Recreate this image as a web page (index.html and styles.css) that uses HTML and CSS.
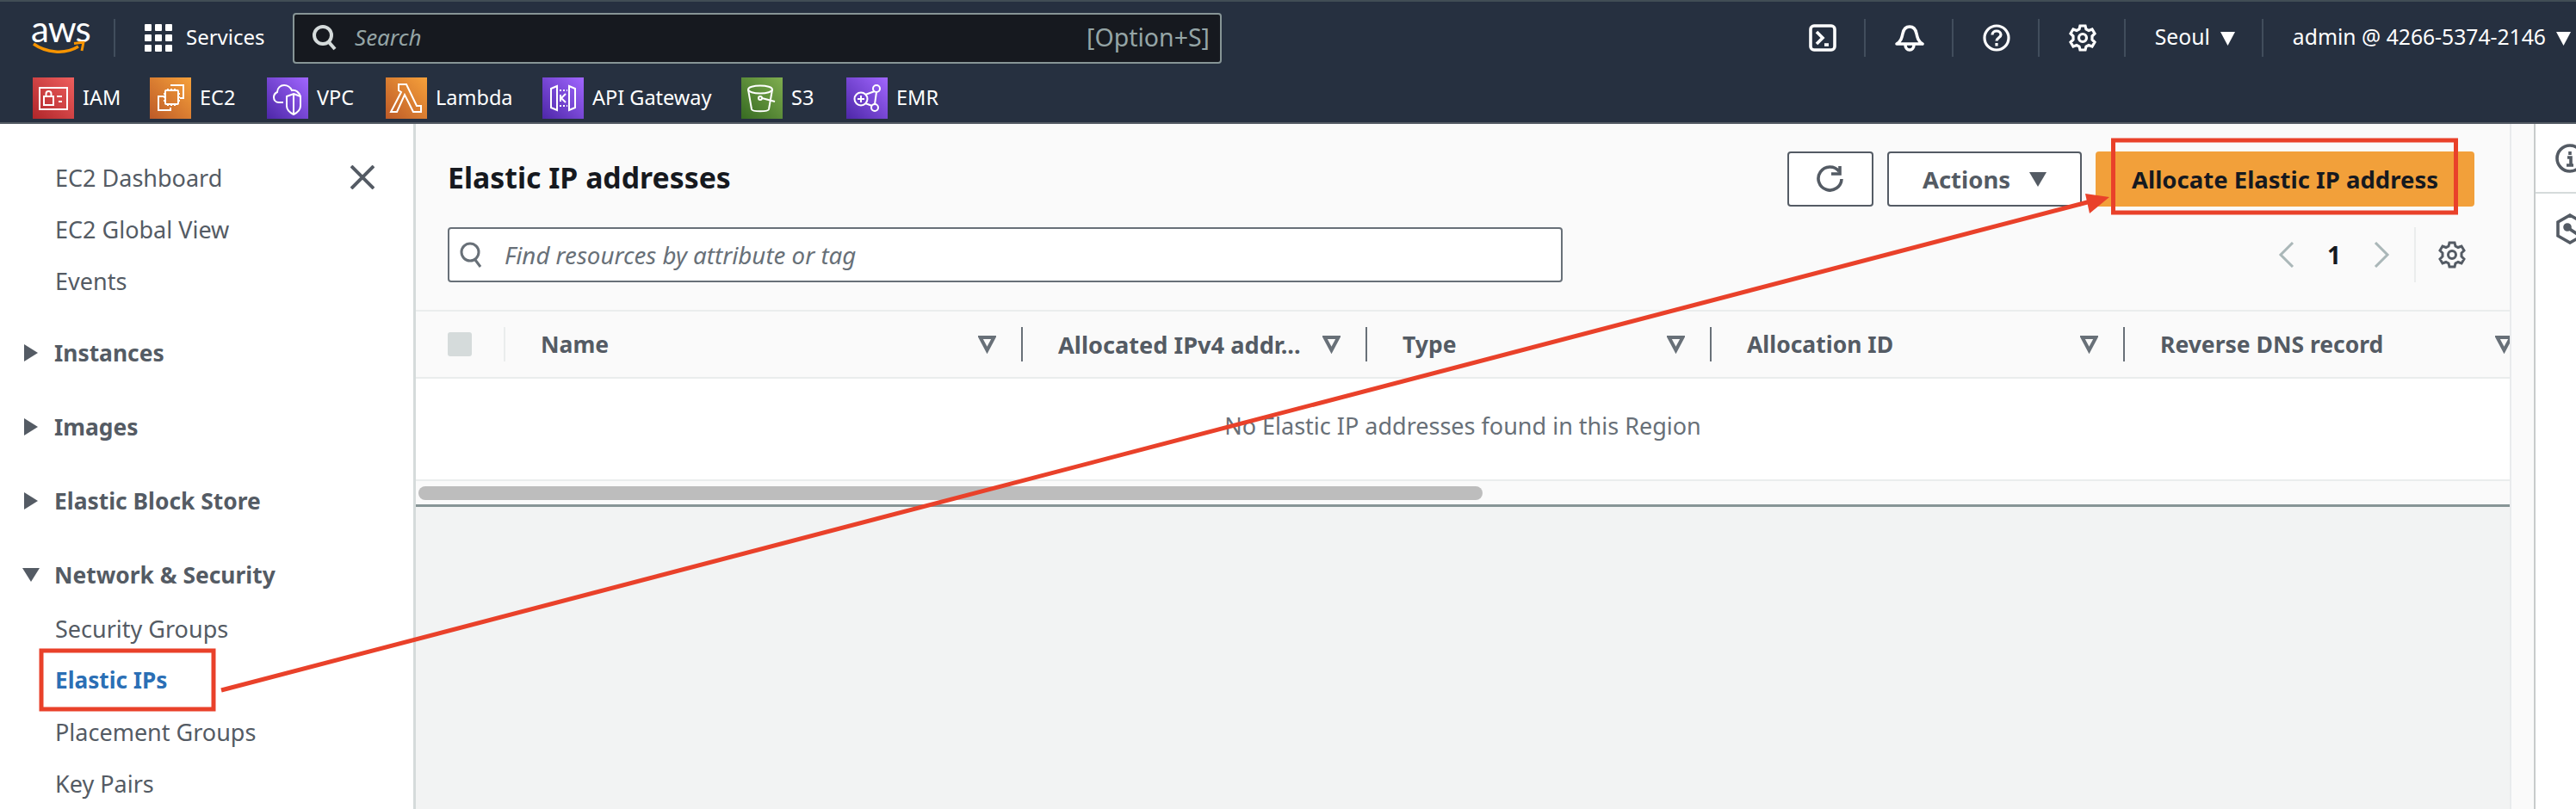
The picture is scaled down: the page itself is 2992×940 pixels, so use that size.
FILE: index.html
```html
<!DOCTYPE html>
<html lang="en">
<head>
    <meta charset="UTF-8">
    <title>Elastic IP addresses | EC2</title>
    <link rel="stylesheet" href="styles.css">
</head>
<body>
    <svg class="defs" width="0" height="0">
        <defs>
            <linearGradient id="gRed" x1="0" y1="1" x2="1" y2="0"><stop offset="0" stop-color="#b0262a"/><stop offset="1" stop-color="#ee5f5e"/></linearGradient>
            <linearGradient id="gOrange" x1="0" y1="1" x2="1" y2="0"><stop offset="0" stop-color="#bd5a28"/><stop offset="1" stop-color="#f6a13a"/></linearGradient>
            <linearGradient id="gPurple" x1="0" y1="1" x2="1" y2="0"><stop offset="0" stop-color="#4d27a8"/><stop offset="1" stop-color="#a166ff"/></linearGradient>
            <linearGradient id="gGreen" x1="0" y1="1" x2="1" y2="0"><stop offset="0" stop-color="#376b22"/><stop offset="1" stop-color="#7fad4f"/></linearGradient>
            <path id="gearShape" d="M13 2h6l1 4 3 1.5 4-1.5 3 5-3 3v4l3 3-3 5-4-1.5-3 1.5-1 4h-6l-1-4-3-1.5-4 1.5-3-5 3-3v-4l-3-3 3-5 4 1.5 3-1.5z"/>
        </defs>
    </svg>

    <header class="topbar">
        <div class="nav-main">
            <div class="logo">
                <span class="logo-text">aws</span>
                <svg class="logo-smile" width="62" height="16" viewBox="0 0 62 16"><path d="M2 3c14 10 36 13 52 3" fill="none" stroke="#f79400" stroke-width="3.4"/><path d="M49 2.500l11-1.500-2 10" fill="none" stroke="#f79400" stroke-width="3"/></svg>
            </div>
            <span class="nav-sep sep-logo"></span>
            <svg class="icon-grid" width="32" height="32" viewBox="0 0 32 32" fill="#fff">
                <rect x="0" y="0" width="8" height="8" rx="1"/><rect x="12" y="0" width="8" height="8" rx="1"/><rect x="24" y="0" width="8" height="8" rx="1"/>
                <rect x="0" y="12" width="8" height="8" rx="1"/><rect x="12" y="12" width="8" height="8" rx="1"/><rect x="24" y="12" width="8" height="8" rx="1"/>
                <rect x="0" y="24" width="8" height="8" rx="1"/><rect x="12" y="24" width="8" height="8" rx="1"/><rect x="24" y="24" width="8" height="8" rx="1"/>
            </svg>
            <span class="services">Services</span>
            <div class="global-search">
                <svg width="30" height="32" viewBox="0 0 30 32" fill="none" stroke="#d5dbdb" stroke-width="4"><circle cx="13" cy="13" r="10"/><path d="M20 21l7 8"/></svg>
                <span class="global-search-text">Search</span>
                <span class="global-search-key">[Option+S]</span>
            </div>
            <div class="nav-icons">
                <svg width="32" height="32" viewBox="0 0 32 32" fill="none" stroke="#fff" stroke-width="3.600"><rect x="2" y="2" width="28" height="28" rx="4"/><path d="M9 9l7 7-7 7"/><path d="M18 24h5"/></svg>
                <span class="nav-sep"></span>
                <svg width="34" height="34" viewBox="0 0 34 34" fill="none" stroke="#fff" stroke-width="3.600"><path d="M2 24c5-3 6-7 7-12 1-5 4-8 8-8s7 3 8 8c1 5 2 9 7 12z" stroke-linejoin="round"/><path d="M12 25a5 6 0 0 0 10 0"/></svg>
                <span class="nav-sep"></span>
                <svg width="32" height="32" viewBox="0 0 32 32" fill="none" stroke="#fff" stroke-width="3.200"><circle cx="16" cy="16" r="14"/><path d="M11 12.500c0-3 2.500-4.500 5-4.500s5 1.500 5 4.500-5 3.500-5 7"/><path d="M16 22v3.500"/></svg>
                <span class="nav-sep"></span>
                <svg width="32" height="32" viewBox="0 0 32 32" fill="none" stroke="#fff" stroke-width="3.200"><use href="#gearShape"/><circle cx="16" cy="16" r="4.500"/></svg>
                <span class="nav-sep"></span>
                <span class="nav-text region">Seoul</span>
                <svg class="caret-small" width="17" height="17" viewBox="0 0 17 17" fill="#fff"><path d="M0 1h17l-8.500 16z"/></svg>
                <span class="nav-sep"></span>
                <span class="nav-text account">admin @ 4266-5374-2146</span>
                <svg class="caret-small" width="17" height="17" viewBox="0 0 17 17" fill="#fff"><path d="M0 1h17l-8.500 16z"/></svg>
            </div>
        </div>
        <div class="nav-fav">
            <a class="fav fav-iam">
                <svg width="48" height="48" viewBox="0 0 48 48" fill="none" stroke="#fff" stroke-width="2"><rect width="48" height="48" fill="url(#gRed)" stroke="none"/><rect x="8" y="12" width="32" height="25"/><rect x="13" y="22" width="11" height="10"/><path d="M15.500 22v-3a3 3 0 0 1 6 0v3M28 22h6M30 28h4"/></svg>
                <span>IAM</span>
            </a>
            <a class="fav fav-ec2">
                <svg width="48" height="48" viewBox="0 0 48 48" fill="none" stroke="#fff" stroke-width="2"><rect width="48" height="48" fill="url(#gOrange)" stroke="none"/><path d="M24 9h15v15l-4 0M19 22h-9v16h14v-3"/><rect x="18" y="15" width="15" height="16" rx="1"/><path d="M21 13v2M25 13v2M29 13v2M21 31v2M25 31v2M29 31v2M16 19h2M16 23h2M16 27h2M33 19h2M33 23h2M33 27h2"/></svg>
                <span>EC2</span>
            </a>
            <a class="fav fav-vpc">
                <svg width="48" height="48" viewBox="0 0 48 48" fill="none" stroke="#fff" stroke-width="2"><rect width="48" height="48" fill="url(#gPurple)" stroke="none"/><path d="M19 29h-5c-4 0-6-3-6-6 0-3 2-5 4-6 0-5 4-8 8-8 4 0 7 2 9 6 4-1 9 2 10 8"/><path d="M31 19l8 3v11c0 5-4 8-8 10-4-2-8-5-8-10V22z"/><path d="M31 19v24"/></svg>
                <span>VPC</span>
            </a>
            <a class="fav fav-lambda">
                <svg width="48" height="48" viewBox="0 0 48 48" fill="none" stroke="#fff" stroke-width="2"><rect width="48" height="48" fill="url(#gOrange)" stroke="none"/><path d="M15 8h9l12 25h5v7h-9L22 20l-9 20H6l12-23-3-2z"/></svg>
                <span>Lambda</span>
            </a>
            <a class="fav fav-api">
                <svg width="48" height="48" viewBox="0 0 48 48" fill="none" stroke="#fff" stroke-width="2"><rect width="48" height="48" fill="url(#gPurple)" stroke="none"/><path d="M17 10l-7 3v22l7 3zM31 10l7 3v22l-7 3z"/><path d="M20 15h2M24 15h2M28 15h1M20 33h2M24 33h2M28 33h1M21 20v8"/><path d="M27 19l-5 5 5 5"/></svg>
                <span>API Gateway</span>
            </a>
            <a class="fav fav-s3">
                <svg width="48" height="48" viewBox="0 0 48 48" fill="none" stroke="#fff" stroke-width="2"><rect width="48" height="48" fill="url(#gGreen)" stroke="none"/><ellipse cx="22" cy="14" rx="14" ry="4.500"/><path d="M8 14l4 23c1 3 19 3 20 0l4-23"/><circle cx="22" cy="24" r="2"/><path d="M24 24l15 4"/></svg>
                <span>S3</span>
            </a>
            <a class="fav fav-emr">
                <svg width="48" height="48" viewBox="0 0 48 48" fill="none" stroke="#fff" stroke-width="2"><rect width="48" height="48" fill="url(#gPurple)" stroke="none"/><circle cx="17" cy="25" r="7.500"/><circle cx="35" cy="13" r="4"/><circle cx="33" cy="35" r="4"/><path d="M13 25h8M17 21v8M22 20l11-4M22 30l8 3M35 17l-2 14"/></svg>
                <span>EMR</span>
            </a>
        </div>
    </header>

    <div class="layout">
        <nav class="sidebar">
            <div class="side-item side-first">
                <span>EC2 Dashboard</span>
                <svg width="28" height="28" viewBox="0 0 28 28" stroke="#545b64" stroke-width="4"><path d="M1 1l26 26M27 1L1 27"/></svg>
            </div>
            <div class="side-item">EC2 Global View</div>
            <div class="side-item">Events</div>
            <div class="side-group"><svg class="caret-right" width="16" height="20" viewBox="0 0 16 20" fill="#545b64"><path d="M0 0l16 10L0 20z"/></svg>Instances</div>
            <div class="side-group"><svg class="caret-right" width="16" height="20" viewBox="0 0 16 20" fill="#545b64"><path d="M0 0l16 10L0 20z"/></svg>Images</div>
            <div class="side-group"><svg class="caret-right" width="16" height="20" viewBox="0 0 16 20" fill="#545b64"><path d="M0 0l16 10L0 20z"/></svg>Elastic Block Store</div>
            <div class="side-group"><svg class="caret-down" width="20" height="16" viewBox="0 0 20 16" fill="#545b64"><path d="M0 0h20L10 16z"/></svg>Network &amp; Security</div>
            <div class="side-item">Security Groups</div>
            <div class="side-item side-active">Elastic IPs</div>
            <div class="side-item">Placement Groups</div>
            <div class="side-item">Key Pairs</div>
        </nav>

        <main class="content">
            <section class="panel">
                <div class="panel-head">
                    <h1>Elastic IP addresses</h1>
                    <div class="actions">
                        <button class="btn btn-refresh">
                            <svg width="32" height="32" viewBox="0 0 32 32" fill="none" stroke="#545b64" stroke-width="3.600"><path d="M26 7a13.500 13.500 0 1 0 3 9"/><path d="M17 8h10V-1" transform="translate(0 2)"/></svg>
                        </button>
                        <button class="btn btn-actions">Actions
                            <svg width="20" height="18" viewBox="0 0 20 18" fill="#545b64"><path d="M0 1h20L10 18z"/></svg>
                        </button>
                        <button class="btn btn-primary">Allocate Elastic IP address</button>
                    </div>
                </div>
                <div class="panel-filter">
                    <div class="filter-input">
                        <svg width="26" height="32" viewBox="0 0 26 32" fill="none" stroke="#687078" stroke-width="3"><circle cx="12" cy="13" r="10"/><path d="M18 22l6 8"/></svg>
                        <span>Find resources by attribute or tag</span>
                    </div>
                    <div class="pager">
                        <svg width="19" height="30" viewBox="0 0 19 30" fill="none" stroke="#aab7b8" stroke-width="3"><path d="M17 1L3 15l14 14"/></svg>
                        <span class="pager-num">1</span>
                        <svg width="19" height="30" viewBox="0 0 19 30" fill="none" stroke="#aab7b8" stroke-width="3"><path d="M2 1l14 14L2 29"/></svg>
                        <span class="pager-sep"></span>
                        <svg width="32" height="32" viewBox="0 0 32 32" fill="none" stroke="#545b64" stroke-width="3"><use href="#gearShape"/><circle cx="16" cy="16" r="4.500"/></svg>
                    </div>
                </div>
                <div class="table-head">
                    <div class="col col-check"><span class="checkbox"></span></div>
                    <div class="col col-data">
                        <span class="col-title">Name</span>
                        <svg class="filter-icon" width="21" height="22" viewBox="0 0 21 22" fill="none" stroke="#687078" stroke-width="4"><path d="M2.500 3h16l-8 15z"/></svg>
                    </div>
                    <div class="col col-data col-ipv4">
                        <span class="col-title">Allocated IPv4 addr...</span>
                        <svg class="filter-icon" width="21" height="22" viewBox="0 0 21 22" fill="none" stroke="#687078" stroke-width="4"><path d="M2.500 3h16l-8 15z"/></svg>
                    </div>
                    <div class="col col-data col-type">
                        <span class="col-title">Type</span>
                        <svg class="filter-icon" width="21" height="22" viewBox="0 0 21 22" fill="none" stroke="#687078" stroke-width="4"><path d="M2.500 3h16l-8 15z"/></svg>
                    </div>
                    <div class="col col-data col-alloc">
                        <span class="col-title">Allocation ID</span>
                        <svg class="filter-icon" width="21" height="22" viewBox="0 0 21 22" fill="none" stroke="#687078" stroke-width="4"><path d="M2.500 3h16l-8 15z"/></svg>
                    </div>
                    <div class="col col-data col-dns">
                        <span class="col-title">Reverse DNS record</span>
                        <svg class="filter-icon" width="21" height="22" viewBox="0 0 21 22" fill="none" stroke="#687078" stroke-width="4"><path d="M2.500 3h16l-8 15z"/></svg>
                    </div>
                </div>
                <div class="table-empty">No Elastic IP addresses found in this Region</div>
                <div class="table-scroll"><span class="scroll-thumb"></span></div>
            </section>
        </main>

        <div class="gutter"></div>

        <aside class="tools">
            <div class="tool tool-info">
                <svg width="36" height="36" viewBox="0 0 36 36" fill="none" stroke="#545b64" stroke-width="3.600"><circle cx="18" cy="18" r="15"/><path d="M18 10v4M15 17h4v8M14 26h8"/></svg>
            </div>
            <div class="tool tool-hex">
                <svg width="36" height="36" viewBox="0 0 36 36" fill="none" stroke="#545b64" stroke-width="3.600"><path d="M18 2l14 8v16l-14 8-14-8V10z"/><circle cx="15" cy="16" r="3" fill="#545b64"/><path d="M16 17l12 8"/></svg>
            </div>
        </aside>
    </div>

    <!-- annotation drawn on top of the screenshot -->
    <svg class="annotation" width="2992" height="940" viewBox="0 0 2992 940">
        <rect x="48" y="756" width="200" height="68" fill="none" stroke="#e9412a" stroke-width="5"/>
        <rect x="2454.500" y="163" width="398" height="84" fill="none" stroke="#e9412a" stroke-width="5"/>
        <path d="M257 802L2432 233" stroke="#e9412a" stroke-width="5" fill="none"/>
        <path d="M2450 229L2422 225L2427 248z" fill="#e9412a"/>
    </svg>
</body>
</html>
```

FILE: styles.css
```css
* {
    box-sizing: border-box;
}
html, body {
    margin: 0;
    padding: 0;
    height: 940px;
    overflow: hidden;
}
body {
    position: relative;
    font-family: "Noto Sans", "Open Sans", sans-serif;
    background-color: #fff;
    color: #16191f;
}
.defs {
    position: absolute;
}
svg {
    display: block;
    flex: none;
}

/* top navigation */
.topbar {
    height: 144px;
    background-color: #263040;
    border-top: 2px solid #414d55;
    border-bottom: 2px solid #545b64;
    color: #fff;
}
.nav-main {
    display: flex;
    align-items: center;
    height: 84px;
    padding-left: 37px;
}
.logo {
    width: 62px;
    height: 40px;
    position: relative;
}
.logo-text {
    position: absolute;
    left: -1px;
    top: -16px;
    font-family: "Lato", sans-serif;
    font-size: 42px;
    line-height: 50px;
    letter-spacing: -1px;
}
.logo-smile {
    position: absolute;
    top: 24px;
    left: 0;
}
.nav-sep {
    width: 2px;
    height: 44px;
    background-color: #414d5c;
}
.sep-logo {
    margin-left: 33px;
}
.icon-grid {
    margin-left: 34px;
}
.services {
    margin-left: 16px;
    padding-bottom: 3px;
    font-size: 24px;
    width: 124px;
}
.global-search {
    display: flex;
    align-items: center;
    width: 1079px;
    height: 59px;
    padding: 0 12px 0 20px;
    background-color: #16191f;
    border: 2px solid #879596;
    border-radius: 4px;
    font-size: 26px;
    color: #95a5a6;
}
.global-search-text {
    margin-left: 20px;
    padding-bottom: 3px;
    font-style: italic;
}
.global-search-key {
    margin-left: auto;
    padding-bottom: 3px;
    font-size: 28.5px;
}
.nav-icons {
    display: flex;
    align-items: center;
    margin-left: auto;
    padding-right: 6px;
}
.nav-icons > svg:first-child {
    margin-right: 32px;
}
.nav-icons > .nav-sep + svg {
    margin-left: 34px;
    margin-right: 32px;
}
.nav-icons > .nav-sep + .nav-text {
    margin-left: 34px;
}
.nav-text {
    padding-bottom: 3px;
    font-size: 24.7px;
}
.caret-small {
    margin-left: 12px;
}
.region + .caret-small {
    margin-right: 31px;
}
.nav-fav {
    display: flex;
    align-items: center;
    height: 56px;
    padding-left: 38px;
}
.fav {
    display: flex;
    align-items: center;
    gap: 10px;
    font-size: 23.5px;
    color: #fff;
}
.fav span {
    padding-bottom: 2px;
}
.fav-iam { width: 136px; }
.fav-ec2 { width: 136px; }
.fav-vpc { width: 138px; }
.fav-lambda { width: 182px; }
.fav-api { width: 231px; }
.fav-s3 { width: 122px; }

/* page body */
.layout {
    display: flex;
    height: 796px;
}
.sidebar {
    flex: none;
    width: 483px;
    padding-top: 32px;
    background-color: #fff;
    border-right: 3px solid #d5dbdb;
    font-size: 27px;
    color: #545b64;
}
.side-item {
    display: flex;
    align-items: center;
    height: 60px;
    padding-left: 64px;
}
.side-first {
    justify-content: space-between;
    padding-right: 45px;
}
.side-active {
    font-size: 26.2px;
    font-weight: bold;
    color: #2b6fb5;
}
.side-group {
    display: flex;
    align-items: center;
    height: 64px;
    margin-top: 22px;
    font-size: 26.4px;
    font-weight: bold;
}
.caret-right {
    margin-left: 28px;
    margin-right: 19px;
}
.caret-down {
    margin-left: 26px;
    margin-right: 17px;
}
.content {
    flex: none;
    width: 2432px;
    background-color: #f2f3f3;
}
.panel {
    padding-top: 32px;
    background-color: #fafafa;
    border-bottom: 3px solid #879596;
}
.panel-head {
    display: flex;
    align-items: center;
    justify-content: space-between;
    height: 64px;
    margin: 0 41px 0 37px;
}
h1 {
    margin: 0;
    padding-bottom: 4px;
    font-size: 33.8px;
    font-weight: bold;
}
.actions {
    display: flex;
    gap: 16px;
}
.btn {
    display: flex;
    align-items: center;
    justify-content: center;
    height: 64px;
    font-family: inherit;
    font-size: 27.5px;
    font-weight: bold;
    color: #545b64;
    background-color: #fff;
    border: 2px solid #545b64;
    border-radius: 4px;
}
.btn-refresh {
    width: 100px;
}
.btn-actions {
    width: 226px;
    gap: 22px;
}
.btn-primary {
    width: 440px;
    color: #16191f;
    background-color: #f2a03a;
    border: none;
}
.panel-filter {
    display: flex;
    align-items: center;
    justify-content: space-between;
    height: 64px;
    margin: 24px 51px 32px 37px;
}
.filter-input {
    display: flex;
    align-items: center;
    gap: 26px;
    width: 1295px;
    height: 64px;
    padding-left: 12px;
    background-color: #fff;
    border: 2px solid #687078;
    border-radius: 4px;
    font-size: 27.7px;
    font-style: italic;
    color: #687078;
}
.pager {
    display: flex;
    align-items: center;
    height: 64px;
}
.pager-num {
    width: 92px;
    text-align: center;
    font-size: 28px;
    font-weight: bold;
}
.pager-sep {
    width: 2px;
    height: 64px;
    margin: 0 26px 0 28px;
    background-color: #eaeded;
}
.table-head {
    display: flex;
    align-items: center;
    height: 80px;
    border-top: 2px solid #eaeded;
    border-bottom: 2px solid #eaeded;
    overflow: hidden;
    font-size: 26.5px;
    font-weight: bold;
    color: #545b64;
}
.col {
    flex: none;
    display: flex;
    align-items: center;
    height: 40px;
}
.col-check {
    width: 104px;
    padding-left: 37px;
    border-right: 2px solid #eaeded;
}
.checkbox {
    width: 28px;
    height: 28px;
    border-radius: 3px;
    background-color: #d5dbdb;
}
.col-data {
    justify-content: space-between;
    width: 601px;
    padding: 0 29px 0 41px;
    border-right: 2px solid #687078;
}
.col-ipv4 { width: 400px; font-size: 27.2px; }
.col-type { width: 400px; }
.col-alloc { width: 480px; }
.col-dns {
    width: 480px;
    border-right: none;
}
.col-title {
    white-space: nowrap;
}
.table-empty {
    display: flex;
    align-items: center;
    justify-content: center;
    height: 117px;
    padding-bottom: 8px;
    background-color: #fff;
    font-size: 27px;
    color: #687078;
}
.table-scroll {
    display: flex;
    align-items: center;
    height: 29px;
    padding-left: 3px;
    border-top: 2px solid #eaeded;
}
.scroll-thumb {
    width: 1236px;
    height: 16px;
    border-radius: 8px;
    background-color: #bdbdbd;
}
.gutter {
    flex: none;
    width: 28px;
    background-color: #fafafa;
    border-left: 2px solid #e9ebed;
}
.tools {
    flex: 1;
    border-left: 2px solid #c8cccc;
    overflow: hidden;
}
.tool {
    display: flex;
    align-items: center;
    padding-left: 22px;
}
.tool-info {
    height: 81px;
    border-bottom: 2px solid #d5dbdb;
}
.tool-hex {
    height: 82px;
}
.annotation {
    position: absolute;
    left: 0;
    top: 0;
    pointer-events: none;
}
```
